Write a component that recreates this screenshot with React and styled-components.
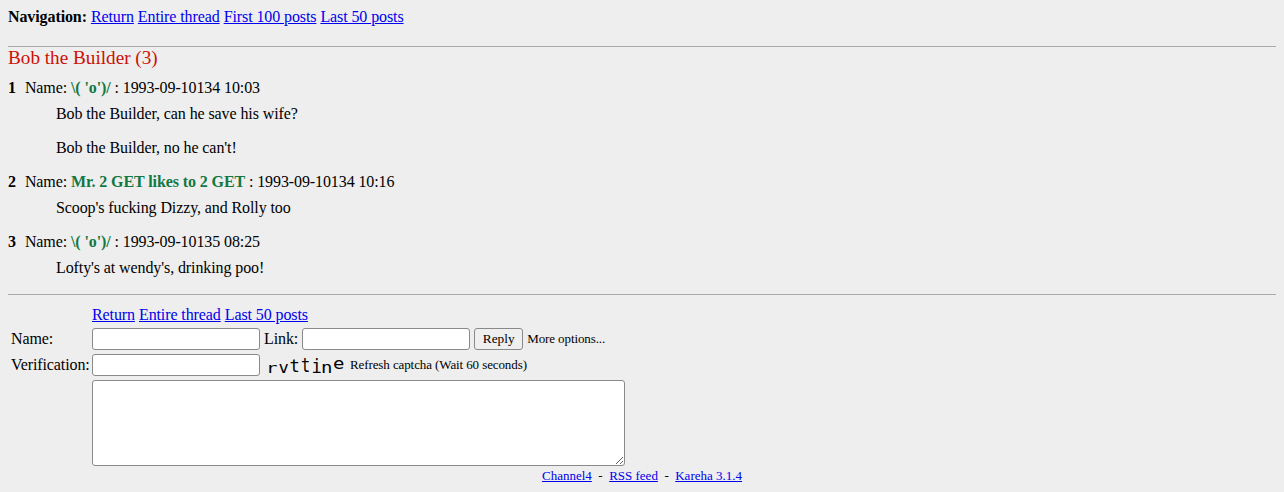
import React from "react";
import styled, { createGlobalStyle } from "styled-components";

const Global = createGlobalStyle`
  html, body { margin: 0; padding: 0; background: #eeeeee; }
  body {
    font-family: "Liberation Serif", "Times New Roman", serif;
    font-size: 16px;
    line-height: 18px;
    color: #000;
  }
`;

const Page = styled.div`
  padding: 8px;
`;

const Nav = styled.div`
  display: flex;
  gap: 4px;
  align-items: baseline;
  height: 18px;
  letter-spacing: -0.1px;
`;

const Bold = styled.b`
  font-weight: bold;
`;

const A = styled.a`
  color: #0000ee;
  text-decoration: underline;
  cursor: pointer;
`;

const Rule = styled.hr`
  border: 0;
  border-top: 1px solid #a8a8a8;
  height: 0;
  margin: ${(p) => p.$m || "0"};
`;

const Title = styled.h2`
  margin: 0;
  font-size: 19.2px;
  line-height: 22px;
  font-weight: normal;
  color: #cc1105;
`;

const Posts = styled.div`
  display: flex;
  flex-direction: column;
  gap: 16px;
  margin-top: 10px;
  letter-spacing: -0.1px;
`;

const Post = styled.div`
  display: flex;
  flex-direction: column;
  gap: 8px;
`;

const PostHead = styled.div`
  display: flex;
  align-items: baseline;
  white-space: pre;
`;

const Num = styled.b`
  font-weight: bold;
  margin-right: 9px;
`;

const Poster = styled.span`
  color: #117743;
  font-weight: bold;
`;

const Body = styled.div`
  margin-left: 48px;
  display: flex;
  flex-direction: column;
  gap: 16px;
`;

const Para = styled.p`
  margin: 0;
`;

const Form = styled.div`
  display: grid;
  grid-template-columns: 84px auto;
  row-gap: 4px;
  align-items: center;
  justify-content: start;
  margin-top: 11px;
  letter-spacing: -0.1px;
`;

const Label = styled.div`
  padding-left: 3px;
  white-space: nowrap;
`;

const Cell = styled.div`
  display: flex;
  align-items: center;
  gap: 4px;
`;

const Input = styled.input`
  box-sizing: border-box;
  width: 168px;
  height: 22px;
  border: 1px solid #8a8a8a;
  border-radius: 3px;
  background: #fff;
  padding: 1px 2px;
  margin: 0;
`;

const Button = styled.button`
  box-sizing: border-box;
  height: 22px;
  width: 49px;
  padding: 0 6px;
  border: 1px solid #8a8a8a;
  border-radius: 3px;
  background: #efefef;
  font-family: "Liberation Serif", serif;
  font-size: 13.3px;
  color: #000;
  margin: 0;
`;

const Small = styled.span`
  font-size: 13px;
`;

const Captcha = styled.span`
  display: inline-flex;
  align-items: flex-end;
  width: 82px;
  height: 20px;
  padding-left: 2px;
  box-sizing: border-box;
  font-family: "DejaVu Sans Mono", monospace;
  font-size: 19px;
  font-weight: normal;
  letter-spacing: 0;
`;

const CapChar = styled.span`
  display: inline-block;
  width: ${(p) => p.$w}px;
  transform: translateY(${(p) => p.$dy}px) scale(${(p) => p.$sx}, ${(p) => p.$sy});
  line-height: 16px;
`;

const TextArea = styled.textarea`
  box-sizing: border-box;
  width: 533px;
  height: 86px;
  border: 1px solid #8a8a8a;
  border-radius: 3px;
  background: #fff;
  margin: 0;
  display: block;
`;

const Footer = styled.div`
  text-align: center;
  font-size: 13px;
  line-height: 15px;
  margin-top: 2px;
  white-space: pre;
`;

const posts = [
  { n: 1, name: "\\( 'o')/", date: "1993-09-10134 10:03", body: ["Bob the Builder, can he save his wife?", "Bob the Builder, no he can't!"] },
  { n: 2, name: "Mr. 2 GET likes to 2 GET", date: "1993-09-10134 10:16", body: ["Scoop's fucking Dizzy, and Rolly too"] },
  { n: 3, name: "\\( 'o')/", date: "1993-09-10135 08:25", body: ["Lofty's at wendy's, drinking poo!"] },
];

const cap = [
  { c: "r", w: 12, dy: 1, sx: 1, sy: 0.75 },
  { c: "v", w: 11, dy: 0, sx: 0.9, sy: 0.85 },
  { c: "t", w: 11, dy: -1, sx: 0.9, sy: 0.9 },
  { c: "t", w: 11, dy: -2, sx: 0.8, sy: 1 },
  { c: "i", w: 10, dy: -1, sx: 0.9, sy: 1 },
  { c: "n", w: 12, dy: 0, sx: 1, sy: 0.85 },
  { c: "e", w: 12, dy: -4, sx: 1, sy: 0.85 },
];

export default function App() {
  return (
    <>
      <Global />
      <Page>
        <Nav>
          <Bold>Navigation:</Bold>
          <A>Return</A>
          <A>Entire thread</A>
          <A>First 100 posts</A>
          <A>Last 50 posts</A>
        </Nav>
        <Rule $m="20px 0 0 0" />
        <Title>Bob the Builder (3)</Title>
        <Posts>
          {posts.map((p) => (
            <Post key={p.n}>
              <PostHead>
                <Num>{p.n}</Num>
                {"Name: "}
                <Poster>{p.name}</Poster>
                {" : " + p.date}
              </PostHead>
              <Body>
                {p.body.map((b, i) => (
                  <Para key={i}>{b}</Para>
                ))}
              </Body>
            </Post>
          ))}
        </Posts>
        <Rule $m="17px 0 0 0" />
        <Form>
          <Label />
          <Cell>
            <A>Return</A>
            <A>Entire thread</A>
            <A>Last 50 posts</A>
          </Cell>
          <Label>Name:</Label>
          <Cell>
            <Input />
            <span>Link:</span>
            <Input />
            <Button>Reply</Button>
            <Small>More options...</Small>
          </Cell>
          <Label>Verification:</Label>
          <Cell>
            <Input />
            <Captcha>
              {cap.map((c, i) => (
                <CapChar key={i} $w={c.w} $dy={c.dy} $sx={c.sx} $sy={c.sy}>
                  {c.c}
                </CapChar>
              ))}
            </Captcha>
            <Small>Refresh captcha (Wait 60 seconds)</Small>
          </Cell>
          <Label />
          <Cell>
            <TextArea />
          </Cell>
        </Form>
        <Footer>
          <A>Channel4</A>
          {"  -  "}
          <A>RSS feed</A>
          {"  -  "}
          <A>Kareha 3.1.4</A>
        </Footer>
      </Page>
    </>
  );
}
